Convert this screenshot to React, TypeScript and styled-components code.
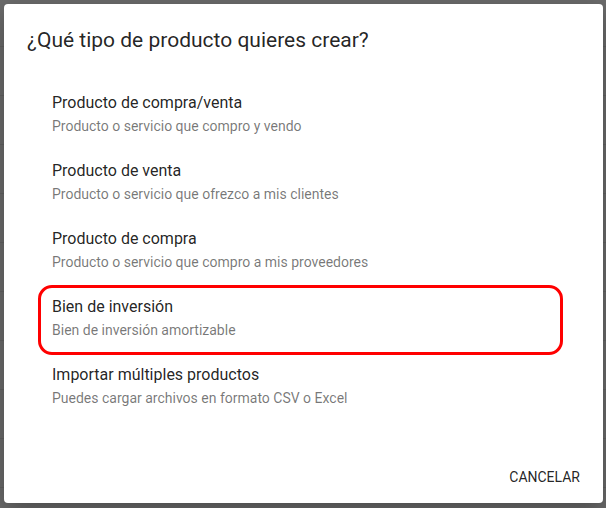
import styled, { createGlobalStyle } from 'styled-components';

const GlobalStyle = createGlobalStyle`
  html, body {
    margin: 0;
    padding: 0;
    width: 606px;
    height: 508px;
    overflow: hidden;
    font-family: Roboto, "Liberation Sans", sans-serif;
  }
`;

const Backdrop = styled.div`
  width: 606px;
  height: 508px;
  box-sizing: border-box;
  padding: 4px 3px 5px 4px;
  background-color: #6b6b6b;
  background-image: repeating-linear-gradient(
    to bottom,
    transparent 0,
    transparent 46px,
    #626262 46px,
    #626262 47px,
    transparent 47px,
    transparent 49px
  );
`;

const Dialog = styled.div`
  width: 599px;
  height: 499px;
  box-sizing: border-box;
  background: #fff;
  border-radius: 4px;
  box-shadow: 0 8px 24px rgba(0, 0, 0, 0.3);
  display: flex;
  flex-direction: column;
`;

const Title = styled.h3`
  margin: 0;
  padding: 24px 24px 24px 23px;
  font-size: 21px;
  line-height: 24px;
  font-weight: 400;
  color: rgba(0, 0, 0, 0.87);
`;

const List = styled.div`
  margin-top: 3px;
  display: flex;
  flex-direction: column;
`;

const Item = styled.div<{ $highlighted?: boolean }>`
  position: relative;
  padding: 14px 0 11px 48px;
  cursor: pointer;

  ${({ $highlighted }) =>
    $highlighted &&
    `
    &::after {
      content: '';
      position: absolute;
      top: 2px;
      bottom: -4px;
      left: 34px;
      right: 40px;
      border: 3.5px solid #ff0000;
      border-radius: 14px;
      pointer-events: none;
    }
  `}
`;

const Primary = styled.div`
  font-size: 16px;
  line-height: 20px;
  color: rgba(0, 0, 0, 0.87);
`;

const Secondary = styled.div`
  margin-top: 3px;
  font-size: 14px;
  line-height: 20px;
  color: rgba(0, 0, 0, 0.54);
`;

const Actions = styled.div`
  margin-top: auto;
  display: flex;
  justify-content: flex-end;
  padding: 8px 15px 8px 8px;
`;

const FlatButton = styled.button`
  height: 36px;
  padding: 0 8px;
  border: none;
  background: transparent;
  font-family: Roboto, "Liberation Sans", sans-serif;
  font-size: 14px;
  font-weight: 400;
  letter-spacing: 0;
  text-transform: uppercase;
  color: rgba(0, 0, 0, 0.87);
  cursor: pointer;
`;

const options = [
  { title: 'Producto de compra/venta', desc: 'Producto o servicio que compro y vendo' },
  { title: 'Producto de venta', desc: 'Producto o servicio que ofrezco a mis clientes' },
  { title: 'Producto de compra', desc: 'Producto o servicio que compro a mis proveedores' },
  { title: 'Bien de inversión', desc: 'Bien de inversión amortizable', highlighted: true },
  { title: 'Importar múltiples productos', desc: 'Puedes cargar archivos en formato CSV o Excel' },
];

const App = () => {
  return (
    <>
      <GlobalStyle />
      <Backdrop>
        <Dialog>
          <Title>¿Qué tipo de producto quieres crear?</Title>
          <List>
            {options.map((o) => (
              <Item key={o.title} $highlighted={o.highlighted}>
                <Primary>{o.title}</Primary>
                <Secondary>{o.desc}</Secondary>
              </Item>
            ))}
          </List>
          <Actions>
            <FlatButton>Cancelar</FlatButton>
          </Actions>
        </Dialog>
      </Backdrop>
    </>
  );
};

export default App;
